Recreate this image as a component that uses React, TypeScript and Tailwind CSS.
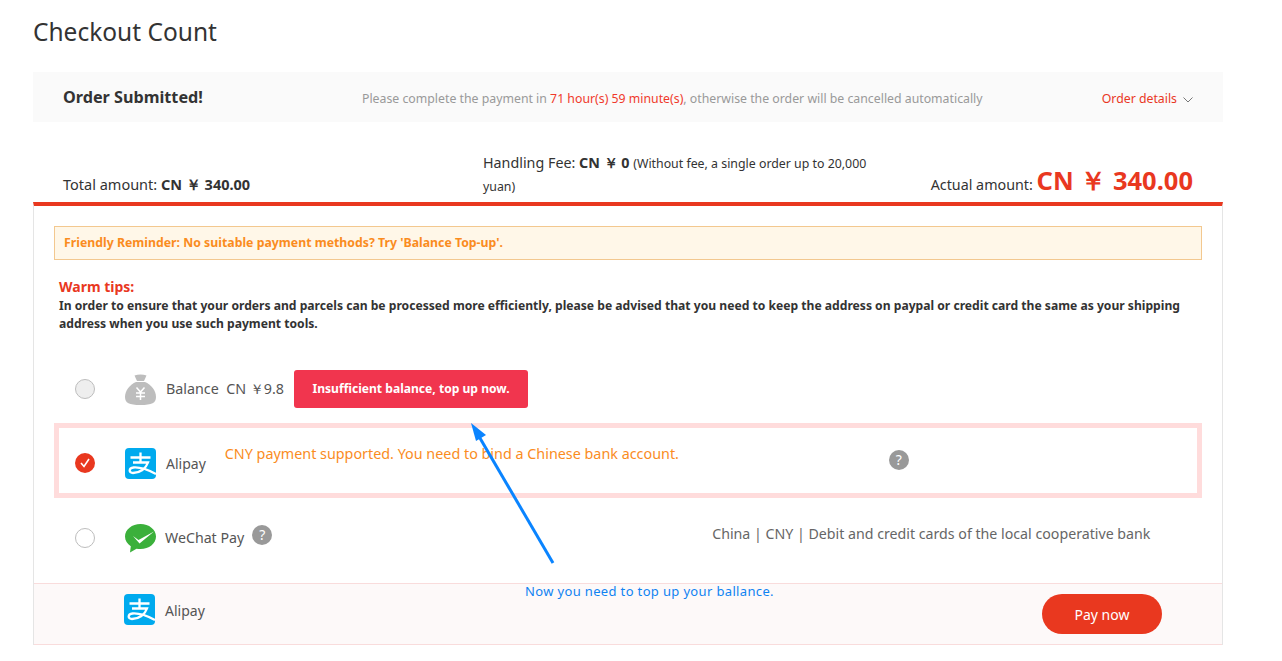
function AlipayIcon() {
  return (
    <svg width="31" height="31" viewBox="0 0 31 31" className="shrink-0">
      <rect width="31" height="31" rx="4" fill="#00aaee" />
      <path d="M5.500 9.500h20M15.500 4.500v9.500M8 14.500h15c-2 6-8 10.500-15 10.500-4.500 0-4.500-5 .5-5.500 6-.5 14 2 22.500 6.500" fill="none" stroke="#fff" strokeWidth="2.300" />
    </svg>
  );
}

function WechatIcon() {
  return (
    <svg width="31" height="29" viewBox="0 0 31 29" className="shrink-0">
      <path d="M15.500 0C7 0 0 5.500 0 12.500c0 4 2.300 7.500 5.800 9.800L5 28.500l6.500-3.800c1.300.3 2.600.4 4 .4C24 25.100 31 19.500 31 12.500S24 0 15.500 0z" fill="#3bb03b" />
      <path d="M8 12l5.500 4L29 7.500l-14.500 12L8 12z" fill="#fff" />
    </svg>
  );
}

function MoneyBag() {
  return (
    <svg width="31" height="31" viewBox="0 0 31 31" className="shrink-0">
      <path d="M9.500 1.500c3.500-1.500 8.500-1.500 12 0l-2.500 5.500h-7z" fill="#bdbdbd" />
      <path d="M11 8h9c6 2.500 11 8.500 11 15 0 6-4 8-15.500 8S0 29 0 23C0 16.500 5 10.500 11 8z" fill="#bdbdbd" />
      <path d="M11.500 13.500l4 4.500 4-4.500M11 19h9M11 22.500h9M15.500 18v8" fill="none" stroke="#fff" strokeWidth="1.500" />
    </svg>
  );
}

function Help() {
  return (
    <span className="flex h-5 w-5 items-center justify-center rounded-full bg-[#999999] text-[14px] leading-none text-white">
      ?
    </span>
  );
}

export default function App() {
  return (
    <div className="relative h-[661px] w-[1282px] overflow-hidden bg-white px-[33px] font-['Noto_Sans','Open_Sans',sans-serif] text-[#333333]">
      <h1 className="flex h-[72px] items-start pt-[14px] text-[24.500px] leading-9 text-[#333333]">Checkout Count</h1>

      {/* Order bar */}
      <div className="flex h-[50px] w-[1190px] items-center bg-[#fafafa] px-[30px]">
        <div className="w-[299px] text-[16.200px] font-bold">Order Submitted!</div>
        <div className="mt-1 flex-1 text-[12.300px] text-[#999999]">
          Please complete the payment in <span className="text-[#f0392b]">71 hour(s) 59 minute(s)</span>, otherwise the order will be cancelled automatically
        </div>
        <div className="mt-1 flex items-center gap-1 text-[12.300px] text-[#e9381f]">
          Order details
          <svg width="10" height="6" viewBox="0 0 10 6" className="ml-0.5 mt-0.5">
            <path d="M.5.500L5 5 9.500.500" fill="none" stroke="#777" strokeWidth="1" />
          </svg>
        </div>
      </div>

      {/* Totals */}
      <div className="flex h-[80px] w-[1190px] items-end px-[30px] pb-[6px]">
        <div className="w-[420px] text-[14.500px] leading-6">
          Total amount: <span className="font-bold">CN ￥ 340.00</span>
        </div>
        <div className="mb-[-2px] w-[400px] text-[14.300px] leading-[22px]">
          Handling Fee: <span className="font-bold">CN ￥ 0</span> <span className="text-[12.350px]">(Without fee, a single order up to 20,000 yuan)</span>
        </div>
        <div className="flex flex-1 items-baseline justify-end text-[14.300px]">
          Actual amount:&nbsp;<span className="text-[25.500px] font-bold leading-8 text-[#e9381f]">CN ￥ 340.00</span>
        </div>
      </div>

      {/* Payment panel */}
      <div className="h-[443px] w-[1190px] border-x border-t-4 border-x-[#e5e5e5] border-t-[#e9381f]">
        <div className="px-5 pt-5">
          <div className="flex h-[34px] items-center border border-[#f3c88f] bg-[#fff7e8] px-[9px] pt-[1px] text-[12.300px] font-bold text-[#fa8c1e]">
            Friendly Reminder: No suitable payment methods? Try 'Balance Top-up'.
          </div>
          <div className="mt-[17px] pl-[5px]">
            <div className="text-[14px] font-bold leading-[20px] text-[#e9381f]">Warm tips:</div>
            <p className="text-[12.130px] font-bold leading-[18px] text-[#333333]">
              In order to ensure that your orders and parcels can be processed more efficiently, please be advised that you need to keep the address on paypal or credit card the same as your shipping address when you use such payment tools.
            </p>
          </div>
        </div>

        {/* Balance */}
        <div className="mt-[36px] flex h-[40px] items-center pl-[41px]">
          <span className="h-5 w-5 rounded-full border border-[#bdbdbd] bg-[#eeeeee]" />
          <span className="ml-[30px]"><MoneyBag /></span>
          <span className="ml-[10px] text-[14.300px] text-[#555555]">Balance&nbsp; CN ￥9.8</span>
          <button className="ml-[10px] h-[38px] w-[234px] rounded-[3px] bg-[#f1354e] text-[12.100px] font-bold text-white">
            Insufficient balance, top up now.
          </button>
        </div>

        {/* Alipay selected */}
        <div className="relative mx-5 mt-[14px] flex h-[75px] items-center border-[5px] border-[#ffdcdc] pl-[16px]">
          <span className="mt-[5px] flex h-5 w-5 items-center justify-center rounded-full bg-[#e9381f]">
            <svg width="12" height="10" viewBox="0 0 12 10">
              <path d="M2 5l3 3.500L10 1" fill="none" stroke="#fff" strokeWidth="1.600" />
            </svg>
          </span>
          <span className="ml-[30px] mt-[5px]"><AlipayIcon /></span>
          <span className="ml-[10px] mt-[6px] text-[14px] text-[#555555]">Alipay</span>
          <span className="mb-[14px] ml-[19px] text-[14.350px] text-[#fa8c1e]">CNY payment supported. You need to bind a Chinese bank account.</span>
          <span className="mb-[2px] ml-[210px]"><Help /></span>
        </div>

        {/* WeChat */}
        <div className="mt-[25px] flex h-[30px] items-center pl-[41px]">
          <span className="h-5 w-5 rounded-full border border-[#bdbdbd] bg-white" />
          <span className="ml-[30px]"><WechatIcon /></span>
          <span className="ml-[9px] text-[14.200px] text-[#555555]">WeChat Pay</span>
          <span className="ml-2 mt-[-6px]"><Help /></span>
          <span className="ml-[440px] mt-[-8px] text-[14.200px] text-[#666666]">China | CNY | Debit and credit cards of the local cooperative bank</span>
        </div>

        {/* Footer */}
        <div className="mt-[30px] flex h-[62px] items-center border-y border-[#f9dcdc] bg-[#fdf9f9] pl-[90px] pr-[60px]">
          <span className="mb-[10px]"><AlipayIcon /></span>
          <span className="mb-2 ml-[10px] text-[14px] text-[#555555]">Alipay</span>
          <button className="ml-auto h-10 w-[120px] rounded-full bg-[#e9381f] text-[14px] text-white">Pay now</button>
        </div>
      </div>

      {/* Annotation drawn over the page */}
      <svg className="absolute left-[460px] top-[415px]" width="100" height="155" viewBox="0 0 100 155">
        <path d="M93 148L17 18" stroke="#0a84ff" strokeWidth="3" fill="none" />
        <path d="M11 8l15 12-10 6z" fill="#0a84ff" />
      </svg>
      <div className="absolute left-[525px] top-[582px] text-[13px] tracking-[0.350px] text-[#1083f2]">
        Now you need to top up your ballance.
      </div>
    </div>
  );
}
